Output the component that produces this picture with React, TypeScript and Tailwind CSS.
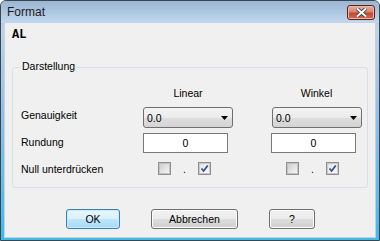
import React from 'react';

const sans = "font-['Liberation_Sans',Arial,sans-serif]";

function Checkbox({ checked }: { checked?: boolean }) {
  return (
    <span className="flex h-[13px] w-[13px] shrink-0 items-center justify-center border border-[#8e8f8f] bg-white">
      <span
        className={
          checked
            ? 'flex h-[11px] w-[11px] items-center justify-center border border-[#c9c9c9] bg-[linear-gradient(135deg,#e4e4e4,#fbfbfb)]'
            : 'h-[11px] w-[11px] border border-[#c2c2c2] bg-[linear-gradient(135deg,#cfcfcf,#f6f6f6)]'
        }
      >
        {checked && (
          <svg width="9" height="9" viewBox="0 0 9 9">
            <path d="M1.5 4.5 L3.6 7 L7.8 1.6" fill="none" stroke="#33489a" strokeWidth="1.7" />
          </svg>
        )}
      </span>
    </span>
  );
}

function Combo({ value }: { value: string }) {
  return (
    <div className="flex h-[21px] w-[90px] items-center justify-between rounded-[3px] border border-[#707070] bg-[linear-gradient(#f4f4f4_0%,#ebebeb_50%,#dedede_50%,#d4d4d4_100%)] pl-[3px] pr-[4px]">
      <span className="leading-[12px]">{value}</span>
      <svg width="7" height="4" viewBox="0 0 7 4">
        <path d="M0 0 H7 L3.5 4 Z" fill="#000" />
      </svg>
    </div>
  );
}

function Field({ value }: { value: string }) {
  return (
    <div className="flex h-[20px] w-[85px] items-center justify-center border border-[#7a7a7a] bg-white leading-[12px]">
      {value}
    </div>
  );
}

function Button({ label, width, primary }: { label: string; width: string; primary?: boolean }) {
  return (
    <div
      className={
        primary
          ? `flex h-[20px] ${width} items-center justify-center rounded-[3px] border border-[#3c7fb1] bg-[linear-gradient(#eaf6fd_0%,#d9f0fc_50%,#bee6fd_50%,#a7d9f5_100%)] shadow-[inset_0_0_0_1px_#c5ecfc] leading-[12px]`
          : `flex h-[20px] ${width} items-center justify-center rounded-[3px] border border-[#707070] bg-[linear-gradient(#f2f2f2_0%,#ebebeb_50%,#dddddd_50%,#cfcfcf_100%)] shadow-[inset_0_0_0_1px_#fcfcfc] leading-[12px]`
      }
    >
      {label}
    </div>
  );
}

export default function App() {
  return (
    <div
      className={`flex h-[241px] w-[380px] flex-col overflow-hidden rounded-t-[6px] border border-[#3d4650] bg-[linear-gradient(#9ab5d3_0%,#bcd3eb_12%,#8fbfe8_50%,#3cbcea_100%)] text-[10.5px] text-black ${sans}`}
    >
      {/* title bar */}
      <div className="flex h-[22px] shrink-0 items-center justify-between bg-[linear-gradient(#9bb6d4,#c1d7ee)] pl-[6px] pr-[4px]">
        <span className="text-[12px] leading-[14px] text-[#1b1b1b]">Format</span>
        <div className="flex h-[15px] w-[28px] items-center justify-center rounded-[3px] border border-[#5b2218] bg-[linear-gradient(#eab0a3_0%,#d98270_45%,#c5482e_55%,#d46a52_100%)] shadow-[inset_0_0_0_1px_#f0b8a8]">
          <svg width="11" height="9" viewBox="0 0 11 9">
            <path d="M1.5 1 L9.5 8 M9.5 1 L1.5 8" stroke="#3b3b3b" strokeWidth="3.6" strokeLinecap="square" />
            <path d="M1.5 1 L9.5 8 M9.5 1 L1.5 8" stroke="#ffffff" strokeWidth="2" strokeLinecap="square" />
          </svg>
        </div>
      </div>

      {/* client area */}
      <div className="mx-[3px] mb-[2px] flex flex-1 flex-col border-x border-b border-[#c4d0dc] bg-[#f0f0f0] pl-[7px] pt-[5px]">
        <span className="font-['Liberation_Mono',monospace] text-[12px] font-bold leading-[14px]">AL</span>

        <div className="relative mt-[25px] flex h-[121px] w-[356px] flex-col rounded-[3px] border border-[#d5dfe5] pl-[8px] pt-[19px]">
          <span className="absolute -top-[8px] left-[7px] bg-[#f0f0f0] px-[2px] leading-[12px]">Darstellung</span>

          <div className="flex leading-[12px]">
            <span className="w-[122px]" />
            <span className="w-[90px] text-center">Linear</span>
            <span className="ml-[39px] w-[89px] text-center">Winkel</span>
          </div>

          <div className="mt-[8px] flex items-start">
            <span className="w-[122px] pt-[2px] leading-[12px]">Genauigkeit</span>
            <Combo value="0.0" />
            <div className="ml-[39px]">
              <Combo value="0.0" />
            </div>
          </div>

          <div className="mt-[5px] flex items-start">
            <span className="w-[122px] pt-[3px] leading-[12px]">Rundung</span>
            <div className="w-[90px]">
              <Field value="0" />
            </div>
            <div className="ml-[38px]">
              <Field value="0" />
            </div>
          </div>

          <div className="mt-[9px] flex items-start">
            <span className="w-[122px] pt-[1px] leading-[12px]">Null unterdrücken</span>
            <div className="flex w-[90px] items-end pl-[15px]">
              <Checkbox />
              <span className="ml-[12px] w-[3px] leading-[12px]">.</span>
              <span className="ml-[12px]">
                <Checkbox checked />
              </span>
            </div>
            <div className="ml-[39px] flex items-end pl-[14px]">
              <Checkbox />
              <span className="ml-[12px] w-[3px] leading-[12px]">.</span>
              <span className="ml-[12px]">
                <Checkbox checked />
              </span>
            </div>
          </div>
        </div>

        <div className="mt-[21px] flex gap-[31px] pl-[54px]">
          <Button label="OK" width="w-[54px]" primary />
          <Button label="Abbrechen" width="w-[87px]" />
          <Button label="?" width="w-[46px]" />
        </div>
      </div>
    </div>
  );
}
